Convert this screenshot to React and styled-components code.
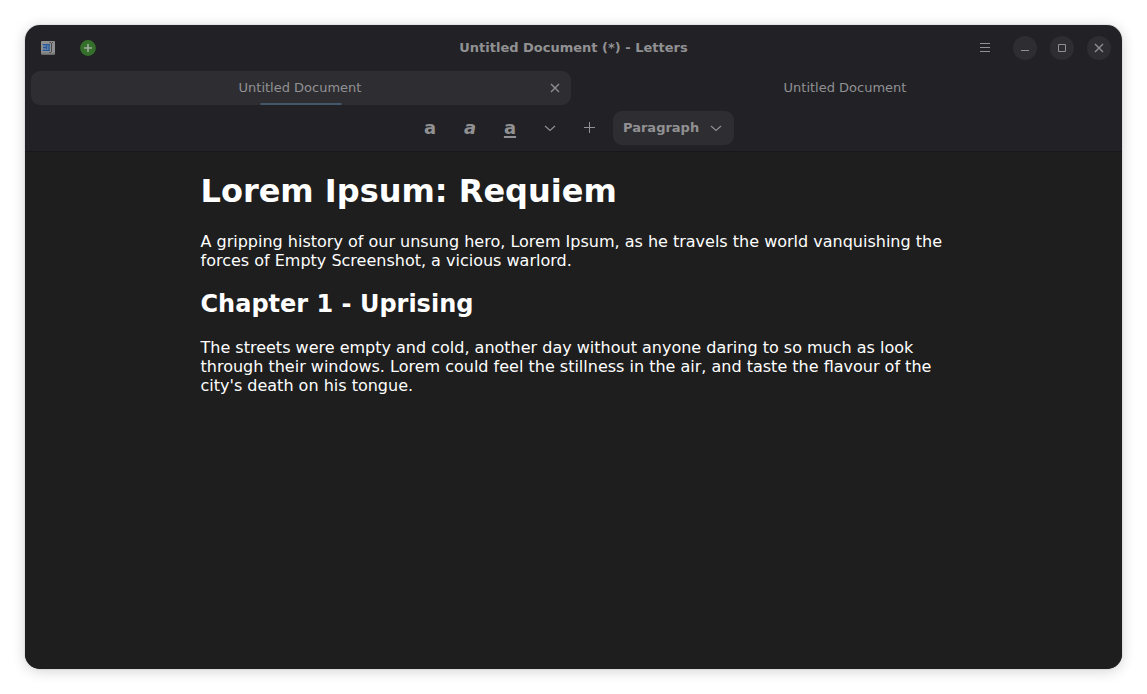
import { useState } from 'react';
import styled, { createGlobalStyle } from 'styled-components';

const color = {
  header: '#222226',
  raised: '#2e2e32',
  text: '#919193',
  view: '#1e1e1e',
  line: '#18181a',
  accent: '#435868',
};

const tabs = ['Untitled Document', 'Untitled Document'];

const formats = [
  { name: 'Bold', variant: 'bold' },
  { name: 'Italic', variant: 'italic' },
  { name: 'Underline', variant: 'underline' },
];

const AppIcon = () => (
  <svg width="16" height="16" viewBox="0 0 16 16">
    <rect x="1" y="1" width="14" height="13.5" rx="1" fill="#8f8f8f" />
    <path d="M1 12.5h14v1a1 1 0 0 1-1 1H2a1 1 0 0 1-1-1z" fill="#7d7d7d" />
    <rect x="3" y="4" width="7" height="7" fill="#5f7d9f" />
    <path
      d="M2.5 4.5h7.5M3 7.5h3.5M2.5 10.5h7.5M9 4.5v6M6.5 5v4"
      stroke="#24589a"
      fill="none"
    />
    <path
      d="M9.5 2.5h1.5M12 2.5h1M11.5 3v9M9.5 12.5h1.5"
      stroke="#4c4c4c"
      fill="none"
    />
  </svg>
);

const AddIcon = () => (
  <svg width="16" height="16" viewBox="0 0 16 16">
    <circle cx="8" cy="8" r="7.9" fill="#35702a" />
    <path d="M8 4v8M4 8h8" stroke="#a3aca1" strokeWidth="1.6" />
  </svg>
);

const MenuIcon = () => (
  <svg width="16" height="16" viewBox="0 0 16 16" stroke="currentColor">
    <path d="M3 3.5h10M3 7.5h10M3 11.5h10" />
  </svg>
);

const MinimizeIcon = () => (
  <svg width="16" height="16" viewBox="0 0 16 16" stroke="currentColor">
    <path d="M4 10.5h8" />
  </svg>
);

const MaximizeIcon = () => (
  <svg width="16" height="16" viewBox="0 0 16 16" stroke="currentColor">
    <path d="M4.5 4.5h7v7h-7z" fill="none" />
  </svg>
);

const CloseIcon = () => (
  <svg width="16" height="16" viewBox="0 0 16 16" stroke="currentColor">
    <path d="M4 4l8 8M12 4l-8 8" strokeWidth="1.3" />
  </svg>
);

const ChevronIcon = () => (
  <svg width="16" height="16" viewBox="0 0 16 16" stroke="currentColor">
    <path d="M3 6l5 4.5L13 6" fill="none" strokeWidth="1.1" />
  </svg>
);

const PlusIcon = () => (
  <svg width="16" height="16" viewBox="0 0 16 16" stroke="currentColor">
    <path d="M7.5 2v11M2 7.5h11" />
  </svg>
);

const App = () => {
  const [activeTab, setActiveTab] = useState(0);
  const [blockStyle, setBlockStyle] = useState('Paragraph');

  return (
    <>
      <GlobalStyle />
      <Window>
        <TitleBar>
          <BarGroup>
            <IconButton aria-label="Letters">
              <AppIcon />
            </IconButton>
            <IconButton aria-label="New document">
              <AddIcon />
            </IconButton>
          </BarGroup>
          <WindowTitle>Untitled Document (*) - Letters</WindowTitle>
          <BarGroup $end>
            <IconButton aria-label="Main menu">
              <MenuIcon />
            </IconButton>
            <WindowControls>
              <RoundButton aria-label="Minimize">
                <MinimizeIcon />
              </RoundButton>
              <RoundButton aria-label="Maximize">
                <MaximizeIcon />
              </RoundButton>
              <RoundButton aria-label="Close">
                <CloseIcon />
              </RoundButton>
            </WindowControls>
          </BarGroup>
        </TitleBar>

        <TabBar>
          {tabs.map((title, index) => (
            <Tab key={index} $active={index === activeTab}>
              <TabTitle onClick={() => setActiveTab(index)}>{title}</TabTitle>
              {index === activeTab && (
                <>
                  <TabClose aria-label="Close tab">
                    <CloseIcon />
                  </TabClose>
                  <TabIndicator />
                </>
              )}
            </Tab>
          ))}
        </TabBar>

        <Toolbar>
          {formats.map(({ name, variant }) => (
            <FormatButton key={name} aria-label={name} $variant={variant}>
              a
            </FormatButton>
          ))}
          <ToolButton aria-label="More formatting">
            <ChevronIcon />
          </ToolButton>
          <ToolButton aria-label="Insert">
            <PlusIcon />
          </ToolButton>
          <SelectWrap>
            <StyleSelect
              aria-label="Block style"
              value={blockStyle}
              onChange={(e) => setBlockStyle(e.target.value)}
            >
              <option>Paragraph</option>
            </StyleSelect>
            <ChevronIcon />
          </SelectWrap>
        </Toolbar>

        <Editor>
          <Page>
            <Heading>Lorem Ipsum: Requiem</Heading>
            <Paragraph>
              A gripping history of our unsung hero, Lorem Ipsum, as he travels
              the world vanquishing the forces of Empty Screenshot, a vicious
              warlord.
            </Paragraph>
            <Subheading>Chapter 1 - Uprising</Subheading>
            <Paragraph>
              The streets were empty and cold, another day without anyone daring
              to so much as look through their windows. Lorem could feel the
              stillness in the air, and taste the flavour of the city's death on
              his tongue.
            </Paragraph>
          </Page>
        </Editor>
      </Window>
    </>
  );
};

export default App;

const GlobalStyle = createGlobalStyle`
  * {
    box-sizing: border-box;
  }

  body {
    margin: 0;
    background: #ffffff;
    font-family: 'DejaVu Sans', sans-serif;
  }

  button,
  select {
    padding: 0;
    border: none;
    background: none;
    color: inherit;
    font: inherit;
    cursor: pointer;
  }

  svg {
    display: block;
    flex-shrink: 0;
  }
`;

const Window = styled.div`
  display: flex;
  flex-direction: column;
  min-height: calc(100vh - 50px);
  margin: 25px;
  overflow: hidden;
  border-radius: 15px;
  background: ${color.header};
  color: ${color.text};
  font-size: 13px;
  box-shadow:
    0 0 0 1px rgba(0, 0, 0, 0.05),
    0 2px 14px rgba(0, 0, 0, 0.18);
`;

const TitleBar = styled.header`
  display: grid;
  grid-template-columns: 1fr auto 1fr;
  align-items: center;
  height: 46px;
  padding: 0 6px;
`;

const BarGroup = styled.div`
  display: flex;
  align-items: center;
  justify-content: ${({ $end }) => ($end ? 'flex-end' : 'flex-start')};
  gap: 6px;
`;

const WindowTitle = styled.h1`
  margin: 0;
  padding-bottom: 2px;
  font-size: 13px;
  font-weight: bold;
`;

const IconButton = styled.button`
  display: flex;
  align-items: center;
  justify-content: center;
  width: 34px;
  height: 34px;
`;

const WindowControls = styled.div`
  display: flex;
  gap: 13px;
  padding: 0 5px;
`;

const RoundButton = styled(IconButton)`
  width: 24px;
  height: 24px;
  border-radius: 50%;
  background: ${color.raised};
`;

const TabBar = styled.nav`
  display: flex;
  gap: 5px;
  padding: 0 6px;
`;

const Tab = styled.div`
  position: relative;
  flex: 1;
  height: 34px;
  border-radius: 9px;
  background: ${({ $active }) => ($active ? color.raised : 'transparent')};
`;

const TabTitle = styled.button`
  width: 100%;
  height: 100%;
  padding: 0 2px 2px 0;
`;

const TabClose = styled(IconButton)`
  position: absolute;
  top: 5px;
  right: 4px;
  width: 24px;
  height: 24px;
`;

const TabIndicator = styled.span`
  position: absolute;
  bottom: 0;
  left: 50%;
  width: 81px;
  height: 2px;
  background: ${color.accent};
  transform: translateX(-50%);
`;

const Toolbar = styled.div`
  display: flex;
  align-items: center;
  justify-content: center;
  gap: 6px;
  padding: 6px;
  border-bottom: 1px solid ${color.line};
`;

const ToolButton = styled(IconButton)``;

const FormatButton = styled(ToolButton)`
  font-size: 18px;
  font-weight: bold;
  line-height: 20px;
  font-style: ${({ $variant }) => ($variant === 'italic' ? 'italic' : 'normal')};
  text-decoration: ${({ $variant }) =>
    $variant === 'underline' ? 'underline 2px' : 'none'};
  text-underline-offset: 2px;
`;

const SelectWrap = styled.div`
  display: flex;
  align-items: center;
  height: 34px;
  border-radius: 9px;
  background: ${color.raised};

  svg {
    margin: 0 10px 0 -26px;
    pointer-events: none;
  }
`;

const StyleSelect = styled.select`
  height: 34px;
  padding: 0 34px 2px 10px;
  border-radius: 9px;
  font-weight: bold;
  appearance: none;
`;

const Editor = styled.main`
  flex: 1;
  padding: 0 20px;
  background: ${color.view};
  color: #ffffff;
`;

const Page = styled.article`
  max-width: 746px;
  margin: 0 auto;
  padding: 21px 0;
  font-size: 16px;
  line-height: 19px;
`;

const Heading = styled.h1`
  margin: 0 0 22px;
  font-size: 32px;
  line-height: 37px;
`;

const Subheading = styled.h2`
  margin: 20px 0;
  font-size: 24px;
  line-height: 28px;
`;

const Paragraph = styled.p`
  margin: 0;
`;
